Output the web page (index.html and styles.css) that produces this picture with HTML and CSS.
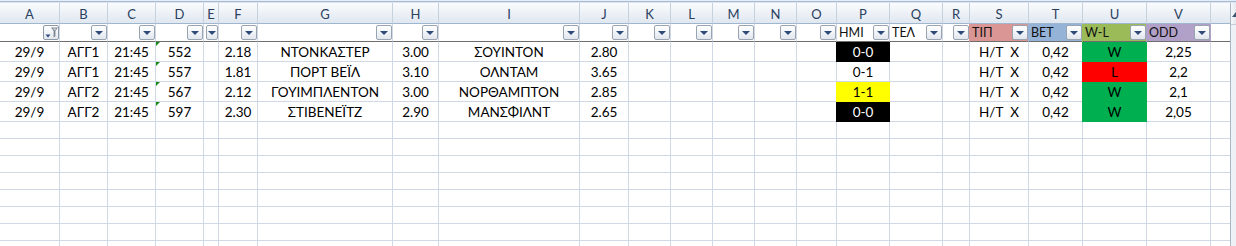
FILE: index.html
```html
<!DOCTYPE html>
<html lang="el">
<head>
<meta charset="utf-8">
<title>Sheet</title>
<link rel="stylesheet" href="styles.css">
</head>
<body>
<div class="topband"></div>
<div class="main">
  <div class="sheet">
    <div class="row hdr">
      <div class="c">A</div><div class="c">B</div><div class="c">C</div><div class="c">D</div><div class="c">E</div><div class="c">F</div><div class="c">G</div><div class="c">H</div><div class="c">I</div><div class="c">J</div><div class="c">K</div><div class="c">L</div><div class="c">M</div><div class="c">N</div><div class="c">O</div><div class="c">P</div><div class="c">Q</div><div class="c">R</div><div class="c">S</div><div class="c">T</div><div class="c">U</div><div class="c">V</div><div class="c"></div>
    </div>
    <div class="row flt">
      <div class="c"><span class="lbl"></span><span class="btn filt"><svg width="16" height="15" viewBox="0 0 16 15"><path d="M2.5 9.5h5l-2.5 3z" fill="#2c4a7c"/><path d="M8 2.5h7l-2.6 3.4v5.3l-1.8 1.3v-6.6z" fill="#7c8590"/><path d="M9.6 3.4h3.8l-1.5 2" fill="#dfe3e8"/></svg></span></div>
      <div class="c"><span class="lbl"></span><span class="btn"><i class="arr"></i></span></div>
      <div class="c"><span class="lbl"></span><span class="btn"><i class="arr"></i></span></div>
      <div class="c"><span class="lbl"></span><span class="btn"><i class="arr"></i></span></div>
      <div class="c"><span class="lbl"></span><span class="btn"><i class="arr"></i></span></div>
      <div class="c"><span class="lbl"></span><span class="btn"><i class="arr"></i></span></div>
      <div class="c"><span class="lbl"></span><span class="btn"><i class="arr"></i></span></div>
      <div class="c"><span class="lbl"></span><span class="btn"><i class="arr"></i></span></div>
      <div class="c"><span class="lbl"></span><span class="btn"><i class="arr"></i></span></div>
      <div class="c"><span class="lbl"></span><span class="btn"><i class="arr"></i></span></div>
      <div class="c"><span class="lbl"></span><span class="btn"><i class="arr"></i></span></div>
      <div class="c"><span class="lbl"></span><span class="btn"><i class="arr"></i></span></div>
      <div class="c"><span class="lbl"></span><span class="btn"><i class="arr"></i></span></div>
      <div class="c"><span class="lbl"></span><span class="btn"><i class="arr"></i></span></div>
      <div class="c"><span class="lbl"></span><span class="btn"><i class="arr"></i></span></div>
      <div class="c"><span class="lbl">ΗΜΙ</span><span class="btn"><i class="arr"></i></span></div>
      <div class="c"><span class="lbl">ΤΕΛ</span><span class="btn"><i class="arr"></i></span></div>
      <div class="c"><span class="lbl"></span><span class="btn"><i class="arr"></i></span></div>
      <div class="c f-pink"><span class="lbl">ΤΙΠ</span><span class="btn"><i class="arr"></i></span></div>
      <div class="c f-blue"><span class="lbl">ΒΕΤ</span><span class="btn"><i class="arr"></i></span></div>
      <div class="c f-olive"><span class="lbl">W-L</span><span class="btn"><i class="arr"></i></span></div>
      <div class="c f-purple"><span class="lbl">ODD</span><span class="btn"><i class="arr"></i></span></div>
      <div class="c"></div>
    </div>

    <div class="row data">
      <div class="c">29/9</div><div class="c">ΑΓΓ1</div><div class="c">21:45</div><div class="c txtnum">552</div><div class="c"></div><div class="c">2.18</div><div class="c">ΝΤΟΝΚΑΣΤΕΡ</div><div class="c">3.00</div><div class="c">ΣΟΥΙΝΤΟΝ</div><div class="c">2.80</div><div class="c"></div><div class="c"></div><div class="c"></div><div class="c"></div><div class="c"></div><div class="c f-black">0-0</div><div class="c"></div><div class="c"></div><div class="c">Η/Τ&nbsp; Χ</div><div class="c">0,42</div><div class="c f-green">W</div><div class="c">2,25</div><div class="c"></div>
    </div>
    <div class="row data">
      <div class="c">29/9</div><div class="c">ΑΓΓ1</div><div class="c">21:45</div><div class="c txtnum">557</div><div class="c"></div><div class="c">1.81</div><div class="c">ΠΟΡΤ ΒΕΪΛ</div><div class="c">3.10</div><div class="c">ΟΛΝΤΑΜ</div><div class="c">3.65</div><div class="c"></div><div class="c"></div><div class="c"></div><div class="c"></div><div class="c"></div><div class="c">0-1</div><div class="c"></div><div class="c"></div><div class="c">Η/Τ&nbsp; Χ</div><div class="c">0,42</div><div class="c f-red">L</div><div class="c">2,2</div><div class="c"></div>
    </div>
    <div class="row data">
      <div class="c">29/9</div><div class="c">ΑΓΓ2</div><div class="c">21:45</div><div class="c txtnum">567</div><div class="c"></div><div class="c">2.12</div><div class="c">ΓΟΥΙΜΠΛΕΝΤΟΝ</div><div class="c">3.00</div><div class="c">ΝΟΡΘΑΜΠΤΟΝ</div><div class="c">2.85</div><div class="c"></div><div class="c"></div><div class="c"></div><div class="c"></div><div class="c"></div><div class="c f-yellow">1-1</div><div class="c"></div><div class="c"></div><div class="c">Η/Τ&nbsp; Χ</div><div class="c">0,42</div><div class="c f-green">W</div><div class="c">2,1</div><div class="c"></div>
    </div>
    <div class="row data">
      <div class="c">29/9</div><div class="c">ΑΓΓ2</div><div class="c">21:45</div><div class="c txtnum">597</div><div class="c"></div><div class="c">2.30</div><div class="c">ΣΤΙΒΕΝΕΪΤΖ</div><div class="c">2.90</div><div class="c">ΜΑΝΣΦΙΛΝΤ</div><div class="c">2.65</div><div class="c"></div><div class="c"></div><div class="c"></div><div class="c"></div><div class="c"></div><div class="c f-black">0-0</div><div class="c"></div><div class="c"></div><div class="c">Η/Τ&nbsp; Χ</div><div class="c">0,42</div><div class="c f-green">W</div><div class="c">2,05</div><div class="c"></div>
    </div>

    <div class="row empty"><div class="c"></div><div class="c"></div><div class="c"></div><div class="c"></div><div class="c"></div><div class="c"></div><div class="c"></div><div class="c"></div><div class="c"></div><div class="c"></div><div class="c"></div><div class="c"></div><div class="c"></div><div class="c"></div><div class="c"></div><div class="c"></div><div class="c"></div><div class="c"></div><div class="c"></div><div class="c"></div><div class="c"></div><div class="c"></div><div class="c"></div></div>
    <div class="row empty"><div class="c"></div><div class="c"></div><div class="c"></div><div class="c"></div><div class="c"></div><div class="c"></div><div class="c"></div><div class="c"></div><div class="c"></div><div class="c"></div><div class="c"></div><div class="c"></div><div class="c"></div><div class="c"></div><div class="c"></div><div class="c"></div><div class="c"></div><div class="c"></div><div class="c"></div><div class="c"></div><div class="c"></div><div class="c"></div><div class="c"></div></div>
    <div class="row empty"><div class="c"></div><div class="c"></div><div class="c"></div><div class="c"></div><div class="c"></div><div class="c"></div><div class="c"></div><div class="c"></div><div class="c"></div><div class="c"></div><div class="c"></div><div class="c"></div><div class="c"></div><div class="c"></div><div class="c"></div><div class="c"></div><div class="c"></div><div class="c"></div><div class="c"></div><div class="c"></div><div class="c"></div><div class="c"></div><div class="c"></div></div>
    <div class="row empty"><div class="c"></div><div class="c"></div><div class="c"></div><div class="c"></div><div class="c"></div><div class="c"></div><div class="c"></div><div class="c"></div><div class="c"></div><div class="c"></div><div class="c"></div><div class="c"></div><div class="c"></div><div class="c"></div><div class="c"></div><div class="c"></div><div class="c"></div><div class="c"></div><div class="c"></div><div class="c"></div><div class="c"></div><div class="c"></div><div class="c"></div></div>
    <div class="row empty"><div class="c"></div><div class="c"></div><div class="c"></div><div class="c"></div><div class="c"></div><div class="c"></div><div class="c"></div><div class="c"></div><div class="c"></div><div class="c"></div><div class="c"></div><div class="c"></div><div class="c"></div><div class="c"></div><div class="c"></div><div class="c"></div><div class="c"></div><div class="c"></div><div class="c"></div><div class="c"></div><div class="c"></div><div class="c"></div><div class="c"></div></div>
    <div class="row empty"><div class="c"></div><div class="c"></div><div class="c"></div><div class="c"></div><div class="c"></div><div class="c"></div><div class="c"></div><div class="c"></div><div class="c"></div><div class="c"></div><div class="c"></div><div class="c"></div><div class="c"></div><div class="c"></div><div class="c"></div><div class="c"></div><div class="c"></div><div class="c"></div><div class="c"></div><div class="c"></div><div class="c"></div><div class="c"></div><div class="c"></div></div>
    <div class="row empty"><div class="c"></div><div class="c"></div><div class="c"></div><div class="c"></div><div class="c"></div><div class="c"></div><div class="c"></div><div class="c"></div><div class="c"></div><div class="c"></div><div class="c"></div><div class="c"></div><div class="c"></div><div class="c"></div><div class="c"></div><div class="c"></div><div class="c"></div><div class="c"></div><div class="c"></div><div class="c"></div><div class="c"></div><div class="c"></div><div class="c"></div></div>
    <div class="row empty"><div class="c"></div><div class="c"></div><div class="c"></div><div class="c"></div><div class="c"></div><div class="c"></div><div class="c"></div><div class="c"></div><div class="c"></div><div class="c"></div><div class="c"></div><div class="c"></div><div class="c"></div><div class="c"></div><div class="c"></div><div class="c"></div><div class="c"></div><div class="c"></div><div class="c"></div><div class="c"></div><div class="c"></div><div class="c"></div><div class="c"></div></div>
  </div>
  <div class="vscroll"><div class="vs-up"><i class="up"></i></div></div>
</div>
</body>
</html>
```

FILE: styles.css
```css
html, body {
  margin: 0;
  padding: 0;
}
body {
  width: 1236px;
  height: 246px;
  overflow: hidden;
  background: #ffffff;
  font-family: Lato, "Liberation Sans", sans-serif;
  color: #000;
}
.topband {
  height: 3px;
  background: linear-gradient(#e6edf6 0 1px, #a6bbd5 1px 2px, #dbe4ef 2px 3px);
}
.main {
  display: flex;
  align-items: stretch;
  height: 243px;
}
.sheet {
  width: 1230px;
  flex: none;
}
.row {
  display: grid;
  grid-template-columns: 60px 48px 48px 48px 15px 39px 135px 46px 141px 49px 42px 42px 42px 42px 40px 53px 53px 27px 59px 54px 64px 64px 19px;
}
.c {
  box-sizing: border-box;
  border-right: 1px solid #d0d7e5;
  border-bottom: 1px solid #d0d7e5;
  overflow: hidden;
  white-space: nowrap;
}
.c:last-child {
  border-right: 0;
}

/* column letters */
.hdr .c {
  height: 21px;
  background: linear-gradient(#fafbfd, #e0e7f0);
  border-right-color: #c6d1de;
  border-bottom-color: #9eb6ce;
  color: #2a4060;
  font-size: 13px;
  line-height: 22px;
  text-align: center;
}

/* autofilter row */
.flt .c {
  height: 18px;
  border-bottom-color: #6e6e6e;
  display: flex;
  align-items: center;
  justify-content: space-between;
}
.lbl {
  padding-left: 2px;
  font-size: 12.5px;
  line-height: 15px;
  color: #111;
}
.btn {
  box-sizing: border-box;
  flex: 0 1 16px;
  min-width: 0;
  height: 15px;
  border: 1px solid #9aa4b1;
  border-radius: 2px;
  background: linear-gradient(#ffffff, #e2e7ee);
  display: flex;
  align-items: center;
  justify-content: center;
}
.btn.filt {
  border-color: #8e99a7;
}
.btn.filt svg {
  display: block;
  margin: -1px;
}
.arr {
  width: 0;
  height: 0;
  border-left: 4px solid transparent;
  border-right: 4px solid transparent;
  border-top: 4px solid #2e4b78;
  margin-top: 1px;
}

/* data rows */
.data .c {
  height: 20px;
  font-size: 13.5px;
  line-height: 20px;
  text-align: center;
  position: relative;
}
.empty .c {
  height: 17px;
}

.txtnum::before {
  content: "";
  position: absolute;
  top: 0;
  left: -1px;
  width: 0;
  height: 0;
  border-top: 5px solid #138a13;
  border-right: 5px solid transparent;
}

/* fills */
.f-black  { background: #000000; color: #fff; border-color: #000000 !important; box-shadow: -1px 0 0 #000000; }
.f-yellow { background: #ffff00; border-color: #ffff00 !important; box-shadow: -1px 0 0 #ffff00; }
.f-green  { background: #00b050; border-color: #00b050 !important; box-shadow: -1px 0 0 #00b050; }
.f-red    { background: #ff0000; border-color: #ff0000 !important; box-shadow: -1px 0 0 #ff0000; }
.f-pink   { background: #da9694; border-right-color: #da9694; box-shadow: -1px 0 0 #da9694; }
.f-blue   { background: #95b3d7; border-right-color: #95b3d7; box-shadow: -1px 0 0 #95b3d7; }
.f-olive  { background: #9bbb59; border-right-color: #9bbb59; box-shadow: -1px 0 0 #9bbb59; }
.f-purple { background: #b1a0c7; border-right-color: #b1a0c7; box-shadow: -1px 0 0 #b1a0c7; }

/* vertical scrollbar (clipped at the window edge) */
.vscroll {
  box-sizing: border-box;
  width: 6px;
  flex: none;
  border-left: 1px solid #a9b6c5;
  background: #eef1f5;
}
.vs-up {
  height: 21px;
  background: linear-gradient(90deg, #f7f9fb, #e3e8ef);
  border-bottom: 1px solid #c3ccd7;
  overflow: hidden;
}
.up {
  display: block;
  width: 0;
  height: 0;
  margin: 9px 0 0 1px;
  border-left: 4px solid transparent;
  border-right: 4px solid transparent;
  border-bottom: 5px solid #3b5272;
}
```
